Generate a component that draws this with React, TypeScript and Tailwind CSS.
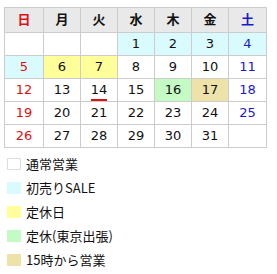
const font = { fontFamily: '"DejaVu Sans", "Noto Sans CJK JP", sans-serif' };

type Day = { d: number; bg?: string; today?: boolean } | null;

const weeks: Day[][] = [
  [null, null, null, { d: 1, bg: 'bg-[#d9fbfd]' }, { d: 2, bg: 'bg-[#d9fbfd]' }, { d: 3, bg: 'bg-[#d9fbfd]' }, { d: 4, bg: 'bg-[#d9fbfd]' }],
  [{ d: 5, bg: 'bg-[#d9fbfd]' }, { d: 6, bg: 'bg-[#ffff99]' }, { d: 7, bg: 'bg-[#ffff99]' }, { d: 8 }, { d: 9 }, { d: 10 }, { d: 11 }],
  [{ d: 12 }, { d: 13 }, { d: 14, today: true }, { d: 15 }, { d: 16, bg: 'bg-[#c4fbc4]' }, { d: 17, bg: 'bg-[#ede3a9]' }, { d: 18 }],
  [{ d: 19 }, { d: 20 }, { d: 21 }, { d: 22 }, { d: 23 }, { d: 24 }, { d: 25 }],
  [{ d: 26 }, { d: 27 }, { d: 28 }, { d: 29 }, { d: 30 }, { d: 31 }, null],
];

const heads = ['日', '月', '火', '水', '木', '金', '土'];
const widths = ['w-[39px]', 'w-[37px]', 'w-[37px]', 'w-[37px]', 'w-[37px]', 'w-[37px]', 'w-[38px]'];

const legend = [
  { label: '通常営業', box: 'bg-white border border-[#dddddd]' },
  { label: '初売りSALE', box: 'bg-[#d9fbfd]' },
  { label: '定休日', box: 'bg-[#ffff99]' },
  { label: '定休(東京出張)', box: 'bg-[#c4fbc4]' },
  { label: '15時から営業', box: 'bg-[#ede3a9]' },
];

function colorFor(i: number) {
  if (i === 0) return 'text-[#dd1111]';
  if (i === 6) return 'text-[#1a1acc]';
  return 'text-[#111111]';
}

export default function App() {
  return (
    <div className="w-[277px] h-[274px] bg-white pl-[4px] pt-[7px]" style={font}>
      <table className="border-collapse table-fixed text-[13px]">
        <thead>
          <tr className="h-[25px]">
            {heads.map((h, i) => (
              <th key={h} className={`${widths[i]} border border-[#cccccc] bg-[#e9e9e9] font-bold text-center ${colorFor(i)}`}>
                {h}
              </th>
            ))}
          </tr>
        </thead>
        <tbody>
          {weeks.map((w, wi) => (
            <tr key={wi} className="h-[23px]">
              {w.map((day, i) => (
                <td key={i} className={`border border-[#cccccc] text-center p-0 ${day?.bg ?? 'bg-white'} ${colorFor(i)}`}>
                  {day && (
                    <span className="relative inline-block leading-[20px]">
                      {day.d}
                      {day.today && (
                        <span className="absolute left-0 right-0 bottom-[-1px] h-[2px] bg-[#dd1111]" />
                      )}
                    </span>
                  )}
                </td>
              ))}
            </tr>
          ))}
        </tbody>
      </table>
      <div className="mt-[8px] flex flex-col gap-[9px] pl-[3px]">
        {legend.map((l) => (
          <div key={l.label} className="flex items-center gap-[5px] h-[15px] text-[13px] leading-[15px] text-[#111111]">
            <span className={`w-[14px] h-[12px] ${l.box}`} />
            <span style={{ fontFamily: '"Noto Sans CJK JP", sans-serif' }}>{l.label}</span>
          </div>
        ))}
      </div>
    </div>
  );
}
